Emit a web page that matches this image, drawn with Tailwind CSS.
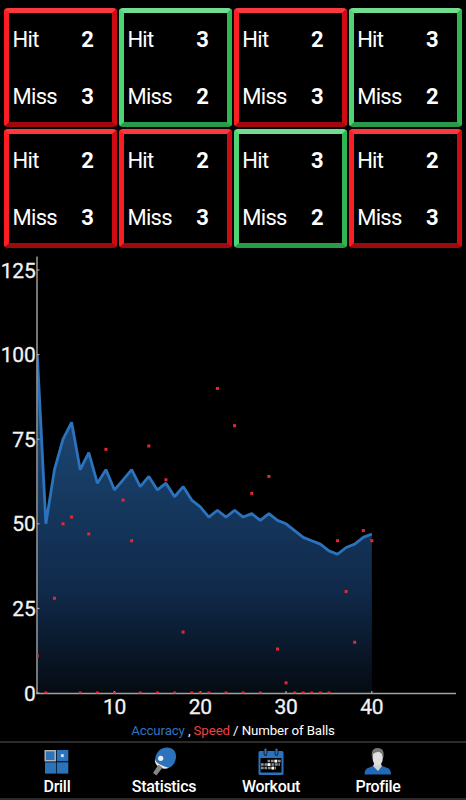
<!DOCTYPE html>
<html lang="en">
<head>
    <meta charset="UTF-8">
    <meta name="viewport" content="width=device-width, initial-scale=1.0">
    <title>Statistics</title>
    <script src="https://cdn.jsdelivr.net/npm/@tailwindcss/browser@4"></script>
</head>
<body class="bg-black text-white w-[466px] h-[800px] overflow-hidden flex flex-col font-[Roboto,sans-serif]">
    <!-- Games -->
    <div id="games" class="grid grid-cols-4 gap-x-[1.5px] gap-y-[1.5px] pt-2 px-1 shrink-0"></div>

    <!-- Accuracy / speed chart -->
    <div class="h-[473px] shrink-0">
        <svg id="chart" class="block" width="466" height="473" viewBox="0 0 466 473">
            <defs>
                <linearGradient id="area" x1="0" y1="106" x2="0" y2="445" gradientUnits="userSpaceOnUse">
                    <stop offset="0" stop-color="#1f5181"/>
                    <stop offset="0.7" stop-color="#10294a"/>
                    <stop offset="1" stop-color="#050b12"/>
                </linearGradient>
            </defs>
        </svg>
    </div>
    <p class="text-[13.3px] leading-[20px] tracking-[-0.13px] text-center whitespace-pre shrink-0"><span class="text-[#2f74bf]">Accuracy</span> , <span class="text-[#f04044]">Speed</span> / Number of Balls</p>

    <!-- Bottom navigation -->
    <nav class="mt-auto h-[59px] border-y-2 border-[#2b2b2b] pl-[3.5px] pr-[34.5px] grid grid-cols-4 text-[16px] leading-[19px] tracking-[-0.3px] font-medium shrink-0">
        <div class="flex flex-col items-center pt-[4px]">
            <svg width="28" height="30" viewBox="0 0 28 30">
                <rect x="2" y="3" width="11.3" height="11.3" fill="#2d73bb"/>
                <rect x="14" y="3" width="11.3" height="11.3" fill="#2d73bb"/>
                <rect x="2" y="15.3" width="11.3" height="11.3" fill="#2d73bb"/>
                <rect x="14" y="15.3" width="11.3" height="11.3" fill="#2d73bb"/>
                <rect x="2.2" y="3.7" width="10" height="10" fill="none" stroke="#b5b5b5" stroke-width="1.4"/>
                <rect x="18.1" y="7.3" width="2.6" height="2.6" fill="#fff" stroke="#8cc4f4" stroke-width=".6"/>
            </svg>
            <span>Drill</span>
        </div>
        <div class="flex flex-col items-center pt-[4px]">
            <svg width="28" height="30" viewBox="0 0 28 30">
                <path d="M5 13C5.500 6 10 .5 17 .5C23 .5 26 4.500 26 9.500C26 15 22.500 19.500 19 20.800L13 20Z" fill="#2d73bb"/>
                <path d="M4.800 12.500Q8 18 19 20.800Q15 22.500 11.500 21L7 18.500Q4.800 16 4.800 12.500Z" fill="#ededed"/>
                <path d="M8.500 17.500L12.500 20.500L6.500 28.500L3 26Z" fill="#858585"/>
                <circle cx="10.700" cy="11.300" r="2.600" fill="#e8eef5"/>
            </svg>
            <span>Statistics</span>
        </div>
        <div class="flex flex-col items-center pt-[4px]">
            <svg width="28" height="30" viewBox="0 0 28 30">
                <rect x="1.500" y="4" width="25" height="24" rx="1.500" fill="#2d73bb"/>
                <rect x="3.500" y="11" width="21" height="14.500" fill="#000"/>
                <path d="M8.500 3V7M19.500 3V7" stroke="#000" stroke-width="3.600" stroke-linecap="round"/>
                <path d="M8.500 2.500V7M19.500 2.500V7" stroke="#2d73bb" stroke-width="2.200" stroke-linecap="round"/>
                <path d="M10.500 14H24M4 17.500H23M4 21H19" stroke="#8d8d8d" stroke-width="2.700" stroke-dasharray="2.700 .8"/>
                <path d="M17.500 12.700h2.700v2.700h-2.700zM10.500 16.200h2.700v2.700h-2.700zM14.500 19.700h2.700v2.700h-2.700z" fill="#fff"/>
            </svg>
            <span>Workout</span>
        </div>
        <div class="flex flex-col items-center pt-[4px]">
            <svg width="28" height="30" viewBox="0 0 28 30">
                <path d="M0.500 27.500Q0.500 22 4 21L9 19H18L23.500 21Q27 22 27 27.500Z" fill="#2369b5"/>
                <path d="M9 19L10.500 16H16.500L18 19L14 24Z" fill="#d2d2d2"/>
                <ellipse cx="13.700" cy="10.500" rx="5.200" ry="8" fill="#e0e0e0"/>
                <path d="M8 11C7 4 9 1.500 13 1C19 .8 20.500 5 19.300 11L18 7L15 4.800Q11 5.500 9.500 6.500Z" fill="#777"/>
            </svg>
            <span>Profile</span>
        </div>
    </nav>

    <script>
        // hits out of five balls, one entry per game
        const hits = [2, 3, 2, 3, 2, 2, 3, 2];
        const lost = 'border-t-[#fb383d] border-r-[#cd0b12] border-b-[#9d090d] border-l-[#fb1e24]';
        const won = 'border-t-[#70dd91] border-r-[#2fb653] border-b-[#289a48] border-l-[#4fd475]';

        document.getElementById('games').innerHTML = hits.map(hit => `
            <div class="h-[119px] border-[5px] rounded-[4px] pl-[3.5px] pr-[18.5px] pt-[14px] flex flex-col gap-[31px] text-[22px] leading-[26px] ${hit > 2 ? won : lost}">
                <div class="flex justify-between"><span class="tracking-[-0.7px]">Hit</span><b>${hit}</b></div>
                <div class="flex justify-between"><span class="tracking-[-0.7px]">Miss</span><b>${5 - hit}</b></div>
            </div>`).join('');

        const accuracy = [100, 50, 66, 75, 80, 66, 71, 62, 66, 60, 63, 66, 61, 64, 60, 62, 58, 61, 57, 55,
            52, 54, 52, 54, 52, 53, 51, 53, 51, 50, 48, 46, 45, 44, 42, 41, 43, 44, 46, 47];
        const speed = [11, 0, 28, 50, 52, 0, 47, 0, 72, 0, 57, 45, 0, 73, 0, 63, 0, 18, 0, 0,
            0, 90, 0, 79, 0, 59, 0, 64, 13, 3, 0, 0, 0, 0, 0, 45, 30, 15, 48, 45];

        const x = n => 37.3 + (n - 1) * 8.578;
        const y = v => 445 - v * 3.384;
        const line = accuracy.map((v, i) => `${x(i + 1)},${y(v)}`).join(' ');

        let out = `<clipPath id="plot"><rect x="37" y="0" width="429" height="445.5"/></clipPath>`;
        out += `<g clip-path="url(#plot)">`;
        out += `<polygon points="${x(1)},445 ${line} ${x(40)},445" fill="url(#area)"/>`;
        out += `<polyline points="${line}" fill="none" stroke="#2b73bd" stroke-width="2.8" stroke-linejoin="bevel"/>`;
        out += `</g>`;

        // axes
        out += `<path d="M37 8.500V446" stroke="#8b8b8b" stroke-width="1.7"/>`;
        out += `<path d="M36 445.500H456" stroke="#a0a0a0" stroke-width="1.300"/>`;
        for (let v = 0; v <= 125; v += 25) {
            out += `<path d="M37 ${y(v)}h2.500" stroke="#bbb"/>`;
            out += `<text x="35.500" y="${y(v) + 7.5}" text-anchor="end" font-size="21" letter-spacing="-.2" fill="#f2f2f2" stroke="#f2f2f2" stroke-width=".3">${v}</text>`;
        }
        for (let n = 10; n <= 40; n += 10) {
            out += `<path d="M${x(n)} 445v-2" stroke="#ccc"/>`;
            out += `<text x="${x(n)}" y="466" text-anchor="middle" font-size="21" letter-spacing="-.2" fill="#f2f2f2" stroke="#f2f2f2" stroke-width=".3">${n}</text>`;
        }

        out += `<g clip-path="url(#plot)">`;
        speed.forEach((v, i) => {
            out += `<rect x="${x(i + 1) - 1.5}" y="${y(v) - 1.5}" width="3" height="3" fill="#e6292f"/>`;
        });
        out += `</g>`;
        document.getElementById('chart').innerHTML += out;
    </script>
</body>
</html>
